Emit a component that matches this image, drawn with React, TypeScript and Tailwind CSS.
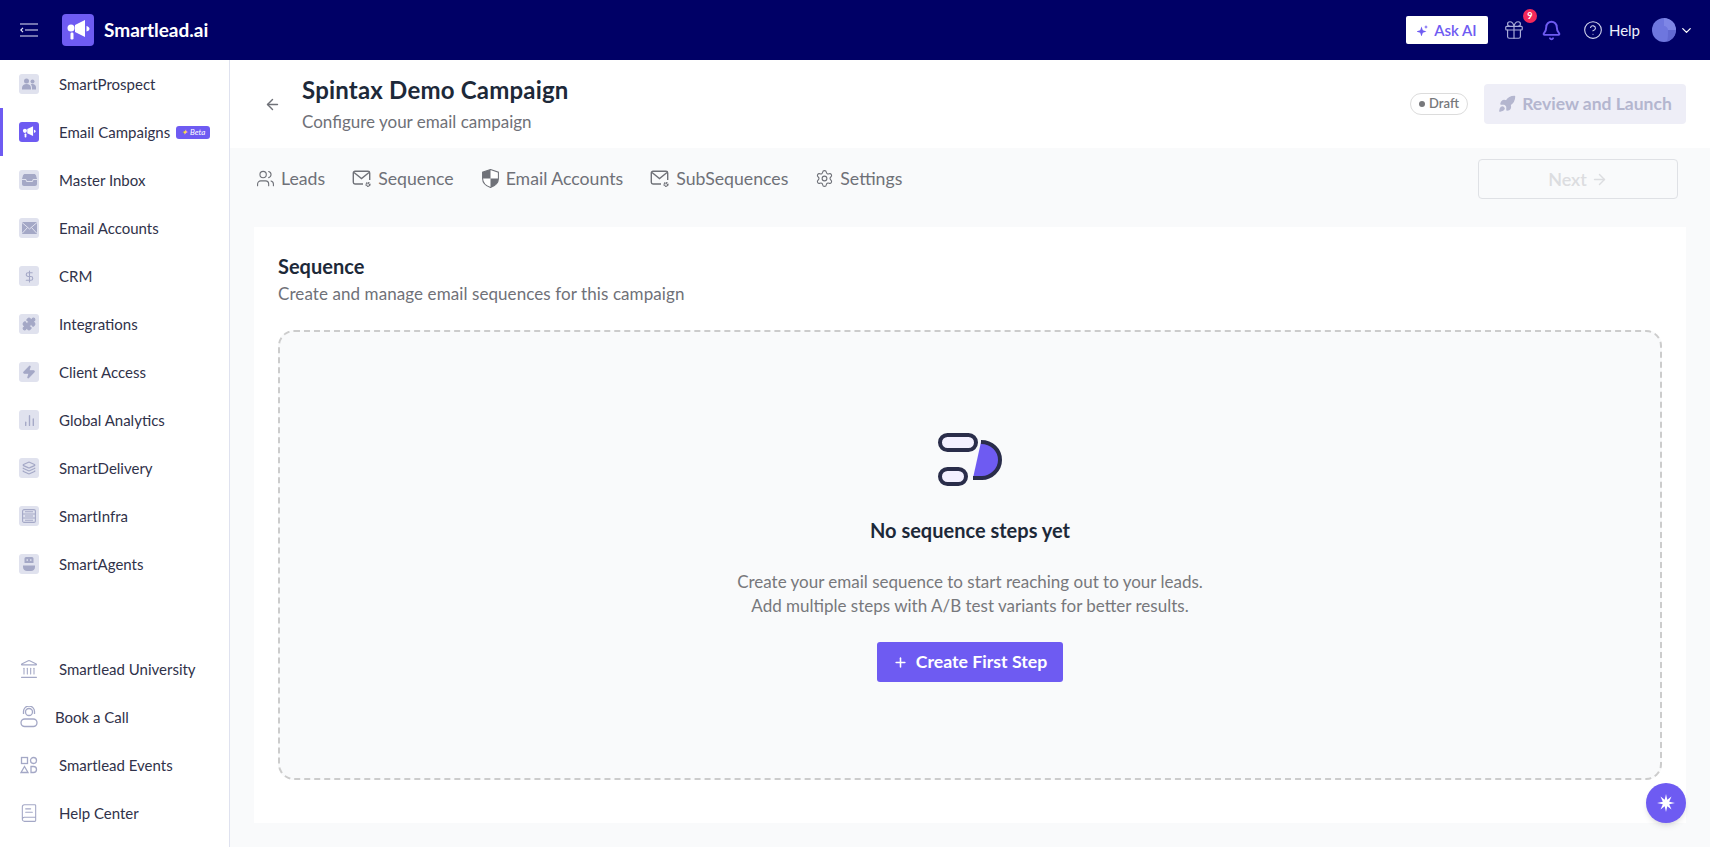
import React from "react";
import { ArrowLeft, ArrowRight, ChevronDown, Plus, Bell, CircleHelp, Gift, Users, Settings, Rocket, Landmark, BookText, DollarSign, Zap, ChartNoAxesColumn, Layers, Puzzle } from "lucide-react";

const F = "font-['Lato','Liberation_Sans',sans-serif]";
const ic = "#a4a8c6";
const tile = "#e0e2ee";

function Tile({ children, active }: { children: React.ReactNode; active?: boolean }) {
  return (
    <div className={`flex h-5 w-5 shrink-0 items-center justify-center rounded-[3px] ${active ? "bg-[#6e5bf2]" : "bg-[#e0e2ee]"}`}>
      {children}
    </div>
  );
}

function Megaphone({ size = 14, color = "#fff" }: { size?: number; color?: string }) {
  return (
    <svg width={size} height={size} viewBox="0 0 24 24" fill={color}>
      <circle cx="5" cy="10" r="3.5" />
      <path d="M9 7 19 2v17L9 14z" />
      <path d="M20.500 8c2 .5 3 1.600 3 2.800s-1 2.300-3 2.800z" />
      <rect x="4.500" y="14.500" width="3" height="7" rx="1.200" />
    </svg>
  );
}

function People() {
  return (
    <svg width="14" height="12" viewBox="0 0 14 12" fill={ic}>
      <circle cx="4.500" cy="3" r="2.500" />
      <circle cx="10.500" cy="3.500" r="2" />
      <path d="M0 10c0-2.500 2-4 4.500-4S9 7.500 9 10v1.500H0z" />
      <path d="M10 11.500V9.500c0-1.300-.4-2.400-1.200-3.200.5-.2 1.100-.3 1.700-.3 2 0 3.500 1.300 3.500 3.300v2.200z" />
    </svg>
  );
}

function Tray() {
  return (
    <svg width="15" height="12" viewBox="0 0 15 12" fill={ic}>
      <path d="M3 0h9c1 0 1.500.5 2 1.500L15 5H11L10 7H5L4 5H0l1-3.500C1.500.5 2 0 3 0z" />
      <path d="M0 6h3.500l1 2h6l1-2H15v4c0 1.200-.8 2-2 2H2c-1.200 0-2-.8-2-2z" />
    </svg>
  );
}

function Envelope() {
  return (
    <svg width="15" height="12" viewBox="0 0 15 12">
      <rect width="15" height="12" fill={ic} />
      <path d="M0 .5 7.500 7 15 .5M0 11.500 5.500 5.500M15 11.500 9.500 5.500" fill="none" stroke={tile} strokeWidth="1" />
    </svg>
  );
}

function ServerIcon() {
  return (
    <svg width="14" height="14" viewBox="0 0 14 14" fill="none" stroke={ic} strokeWidth="1.100">
      <rect x=".6" y=".6" width="12.800" height="12.800" rx="1.500" />
      <path d="M.6 5h12.800M.6 9h12.800M3 2.800h8M3 7h8M3 11.200h8" />
    </svg>
  );
}

function Agent() {
  return (
    <svg width="12" height="14" viewBox="0 0 12 14" fill={ic}>
      <path d="M3 0h6a1.500 1.500 0 0 1 1.500 1.500V6h-9V1.500A1.500 1.500 0 0 1 3 0z" />
      <rect x="3.500" y="2.300" width="1.500" height="1.500" fill={tile} />
      <rect x="7" y="2.300" width="1.500" height="1.500" fill={tile} />
      <path d="M0 8.500h12V10c0 2.500-2 4-4 4H4c-2 0-4-1.500-4-4z" />
    </svg>
  );
}

const items: { label: string; icon: React.ReactNode; active?: boolean }[] = [
  { label: "SmartProspect", icon: <People /> },
  { label: "Email Campaigns", icon: <Megaphone />, active: true },
  { label: "Master Inbox", icon: <Tray /> },
  { label: "Email Accounts", icon: <Envelope /> },
  { label: "CRM", icon: <DollarSign size={13} color={ic} /> },
  { label: "Integrations", icon: <Puzzle size={14} color={ic} fill={ic} /> },
  { label: "Client Access", icon: <Zap size={14} color={ic} fill={ic} /> },
  { label: "Global Analytics", icon: <ChartNoAxesColumn size={13} color={ic} strokeWidth={2.500} /> },
  { label: "SmartDelivery", icon: <Layers size={14} color={ic} /> },
  { label: "SmartInfra", icon: <ServerIcon /> },
  { label: "SmartAgents", icon: <Agent /> },
];

function BookCall() {
  return (
    <svg width="18" height="22" viewBox="0 0 18 22" fill="none" stroke={ic} strokeWidth="1.300">
      <circle cx="9" cy="6" r="3.500" />
      <path d="M3.500 8V5.500a5.500 5.500 0 0 1 11 0V8" />
      <rect x="1" y="13" width="16" height="7.500" rx="3.700" />
    </svg>
  );
}

function EventsIcon() {
  return (
    <svg width="18" height="18" viewBox="0 0 18 18" fill="none" stroke={ic} strokeWidth="1.300">
      <rect x="1.500" y="1.500" width="6" height="6" />
      <circle cx="13.500" cy="4.500" r="3" />
      <path d="M4.500 10.500 8 16.500H1zM11 10.500h2.500a3 3 0 0 1 0 6H11z" />
    </svg>
  );
}

function Row({ label, icon, active }: { label: string; icon: React.ReactNode; active?: boolean }) {
  return (
    <div className="relative flex h-12 items-center pl-[19px]">
      {active && <div className="absolute inset-y-0 left-0 w-[3px] bg-[#6e5bf2]" />}
      <Tile active={active}>{icon}</Tile>
      <span className="ml-5 whitespace-nowrap text-[15px] text-[#30324a]">{label}</span>
      {active && (
        <span className="ml-[6px] flex h-[13px] w-[34px] items-center justify-center gap-[2px] rounded-[3px] bg-[#6e5bf2] text-[8px] italic text-white">
          <span className="text-[#ffd84d]">✦</span>Beta
        </span>
      )}
    </div>
  );
}

function PlainRow({ label, icon, ml = "ml-5" }: { label: string; icon: React.ReactNode; ml?: string }) {
  return (
    <div className="flex h-12 items-center pl-[19px]">
      <div className="flex h-5 w-5 shrink-0 items-center justify-center">{icon}</div>
      <span className={`${ml} whitespace-nowrap text-[15px] text-[#30324a]`}>{label}</span>
    </div>
  );
}

function MailGear() {
  return (
    <svg width="20" height="18" viewBox="0 0 20 18" fill="none" stroke="#6f7178" strokeWidth="1.400">
      <path d="M11 14H3a1.700 1.700 0 0 1-1.700-1.700V3A1.700 1.700 0 0 1 3 1.300h13A1.700 1.700 0 0 1 17.700 3v7" />
      <path d="m2 2.500 7.500 6 7.500-6" />
      <circle cx="16" cy="14.500" r="1.700" strokeWidth="1.800" strokeDasharray="1.300 .5" />
    </svg>
  );
}

function Shield() {
  return (
    <svg width="17" height="19" viewBox="0 0 16 18" className="mx-px">
      <path d="M8 .5 15.500 3v6c0 4-3.200 7-7.500 8.500C3.700 16 .5 13 .5 9V3z" fill="#fff" stroke="#6f7178" strokeWidth="1" />
      <path d="M8 .5 .5 3v6H8zM8 9v8.500c4.300-1.500 7.500-4.500 7.500-8.500z" fill="#6f7178" />
    </svg>
  );
}

function Tab({ icon, label }: { icon: React.ReactNode; label: string }) {
  return (
    <div className="flex items-center gap-[6px] text-[#6f7178]">
      {icon}
      <span className="whitespace-nowrap text-[17.700px]">{label}</span>
    </div>
  );
}

function EmptyIcon() {
  return (
    <svg width="68" height="56" viewBox="0 0 68 56" fill="none">
      <rect x="4" y="4" width="36" height="15" rx="7.500" fill="#f3f0ff" stroke="#2a2d4a" strokeWidth="4" />
      <rect x="4" y="38" width="26" height="15" rx="7.500" fill="#f3f0ff" stroke="#2a2d4a" strokeWidth="4" />
      <path d="M45 11C56 11 64 19 64 29C64 39 55 47 46 47H37z" fill="#6e5bf2" />
      <path d="M45 11C56 11 64 19 64 29C64 39 55 47 46 47H37" stroke="#2a2d4a" strokeWidth="4" />
    </svg>
  );
}

export default function App() {
  return (
    <div className={`${F} flex h-[847px] w-[1710px] flex-col overflow-hidden bg-[#f9fafb]`}>
      <header className="flex h-[60px] shrink-0 items-center bg-[#000066] pl-5 pr-4">
        <svg width="18" height="14" viewBox="0 0 18 14" fill="none" stroke="#e3e5f5" strokeWidth="1.200">
          <path d="M0 1h18M5 7h13M0 13h18M3 4.800 .8 7 3 9.200" />
        </svg>
        <div className="ml-[24px] flex h-8 w-8 items-center justify-center rounded-[4px] bg-[#6e5bf2]">
          <Megaphone size={24} />
        </div>
        <span className="ml-[10px] text-[19px] font-bold text-white">Smartlead.ai</span>
        <div className="ml-auto flex h-7 w-[82px] items-center justify-center gap-[6px] rounded-[2px] bg-white text-[15px] font-semibold text-[#6e5bf2]">
          <svg width="11" height="11" viewBox="0 0 11 11" fill="#6e5bf2">
            <path d="M4.500 1.500 5.800 5.200 9.500 6.500 5.800 7.800 4.500 11.500 3.200 7.800 -.5 6.500 3.200 5.200z" />
            <path d="M9 0l.6 1.400L11 2l-1.400.6L9 4l-.6-1.400L7 2l1.400-.6z" />
          </svg>
          Ask AI
        </div>
        <div className="relative ml-[15px]">
          <Gift size={22} color="#a9acd8" strokeWidth={1.300} />
          <span className="absolute -right-[12px] -top-[10px] flex h-[14px] w-[14px] items-center justify-center rounded-full bg-[#f5295a] text-[9px] font-bold text-white">9</span>
        </div>
        <Bell size={21} color="#6e5bf2" strokeWidth={2.200} className="ml-[16px]" />
        <CircleHelp size={20} color="#d5d8ef" strokeWidth={1.300} className="ml-[21px]" />
        <span className="ml-[6px] text-[15px] text-[#eef0fb]">Help</span>
        <div className="ml-3 h-6 w-6 overflow-hidden rounded-full">
          <svg width="24" height="24" viewBox="0 0 24 24">
            <rect width="24" height="24" fill="#6e76de" />
            <path d="M12 0a12 12 0 0 1 12 12h-8c0-2-2-4-4-4z" fill="#7e86e6" />
            <path d="M16 12h8a12 12 0 0 1-9 11.500c1-3 1-8 1-11.500z" fill="#6269d2" />
          </svg>
        </div>
        <ChevronDown size={15} color="#fff" className="ml-[3px]" />
      </header>
      <div className="flex min-h-0 flex-1">
        <aside className="flex w-[230px] shrink-0 flex-col border-r border-[#dfe2ef] bg-white">
          {items.map((it) => (
            <Row key={it.label} {...it} />
          ))}
          <div className="mt-auto pb-[10px]">
            <PlainRow label="Smartlead University" icon={<Landmark size={20} color={ic} strokeWidth={1.300} />} />
            <PlainRow label="Book a Call" ml="ml-4" icon={<BookCall />} />
            <PlainRow label="Smartlead Events" icon={<EventsIcon />} />
            <PlainRow label="Help Center" icon={<BookText size={20} color={ic} strokeWidth={1.300} />} />
          </div>
        </aside>
        <main className="relative flex min-w-0 flex-1 flex-col">
          <div className="flex h-[88px] shrink-0 items-center bg-white pl-[34px] pr-6">
            <ArrowLeft size={17} color="#6f7178" />
            <div className="ml-[21px]">
              <div className="text-[24px] font-bold leading-8 tracking-[0.2px] text-[#1d2939]">Spintax Demo Campaign</div>
              <div className="mt-1 text-[17px] leading-6 text-[#6f7178]">Configure your email campaign</div>
            </div>
            <div className="ml-auto flex h-[22px] w-[58px] items-center justify-center gap-1 rounded-full border border-[#dcdcdc] text-[13px] font-semibold text-[#77787c]">
              <span className="h-[6px] w-[6px] rounded-full bg-[#77787c]" />Draft
            </div>
            <div className="ml-4 flex h-10 w-[202px] items-center justify-center gap-[6px] rounded-[4px] bg-[#eeeef7] text-[17.500px] font-bold text-[#b4b6cf]">
              <Rocket size={18} color="#b4b6cf" fill="#b4b6cf" />Review and Launch
            </div>
          </div>
          <div className="flex h-[79px] shrink-0 items-start pl-[26px] pr-[32px] pt-[11px]">
            <div className="flex h-10 items-center gap-[27px]">
              <Tab icon={<Users size={19} strokeWidth={1.400} />} label="Leads" />
              <Tab icon={<MailGear />} label="Sequence" />
              <Tab icon={<Shield />} label="Email Accounts" />
              <Tab icon={<MailGear />} label="SubSequences" />
              <Tab icon={<Settings size={19} strokeWidth={1.400} />} label="Settings" />
            </div>
            <div className="ml-auto flex h-10 w-[200px] items-center justify-center gap-1 rounded-[4px] border-[1.500px] border-[#dfe1e5] text-[18px] font-semibold text-[#dcdde0]">
              Next<ArrowRight size={17} />
            </div>
          </div>
          <div className="mx-6 flex h-[596px] flex-col bg-white px-6 pt-[25px]">
            <h2 className="text-[20px] font-bold leading-7 text-[#1d2939]">Sequence</h2>
            <p className="mt-[2px] text-[17px] leading-6 tracking-[0.085px] text-[#6f7178]">Create and manage email sequences for this campaign</p>
            <div className="mt-[24px] flex h-[450px] flex-col items-center rounded-[16px] border-2 border-dashed border-[#cccccc] bg-[#f9fafb] pt-[99px]">
              <EmptyIcon />
              <div className="mt-[29px] text-[20px] font-bold leading-7 text-[#1d2939]">No sequence steps yet</div>
              <div className="mt-[26px] text-center text-[17px] leading-6 text-[#77787c]">
                <div>Create your email sequence to start reaching out to your leads.</div>
                <div>Add multiple steps with A/B test variants for better results.</div>
              </div>
              <div className="mt-6 flex h-10 w-[186px] items-center justify-center gap-2 rounded-[3px] bg-[#6e5bf2] text-[17.700px] font-bold text-white">
                <Plus size={15} strokeWidth={2.500} />Create First Step
              </div>
            </div>
          </div>
          <div className="absolute bottom-6 right-6 flex h-10 w-10 items-center justify-center rounded-full bg-[#6e5bf2] shadow-md">
            <svg width="18" height="18" viewBox="0 0 18 18" fill="#fff">
              <path d="M9 0 10.300 5.800 14.500 2.500 12.200 7.700 18 9 12.200 10.300 14.500 15.500 10.300 12.200 9 18 7.700 12.200 3.500 15.500 5.800 10.300 0 9 5.800 7.700 3.500 2.500 7.700 5.800z" />
            </svg>
          </div>
        </main>
      </div>
    </div>
  );
}
